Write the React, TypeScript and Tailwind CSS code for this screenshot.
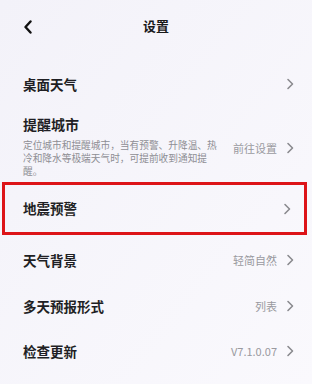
import React from "react";

const Chevron = () => (
  <svg width="8" height="12" viewBox="0 0 8 12" className="shrink-0">
    <path d="M2 1.5 L6.5 6 L2 10.5" fill="none" stroke="#8a8a8f" strokeWidth="1.6" strokeLinecap="round" strokeLinejoin="round" />
  </svg>
);

const Row = ({ title, value, h }: { title: string; value?: string; h: string }) => (
  <div className={`flex items-center justify-between pl-[23px] pr-[18px] ${h}`}>
    <span className="text-[13.5px] font-semibold text-[#1f1f24]">{title}</span>
    <div className="flex items-center gap-[9px]">
      {value && <span className="text-[11px] text-[#9a9aa0]">{value}</span>}
      <Chevron />
    </div>
  </div>
);

export default function App() {
  return (
    <div
      className="w-[312px] h-[384px] overflow-hidden bg-gradient-to-br from-[#f3f2f9] to-[#faf9fd]"
      style={{ fontFamily: '"Noto Sans CJK SC", "Noto Sans", sans-serif' }}
    >
      {/* Header */}
      <div className="relative flex items-center justify-center h-[52px]">
        <svg width="10" height="14" viewBox="0 0 10 14" className="absolute left-[23px] top-[20px]">
          <path d="M7.5 1.5 L2.5 7 L7.5 12.5" fill="none" stroke="#111" strokeWidth="2.4" strokeLinecap="round" strokeLinejoin="round" />
        </svg>
        <span className="text-[13px] font-bold text-[#1a1a1a]">设置</span>
      </div>

      <div className="h-[10px]" />
      <Row title="桌面天气" h="h-[44px]" />

      {/* Reminder city */}
      <div className="flex items-center justify-between pl-[23px] pr-[18px] h-[76px]">
        <div className="flex flex-col mt-[4px]">
          <span className="text-[14px] font-semibold text-[#1f1f24] leading-[20px]">提醒城市</span>
          <span className="text-[9.7px] text-[#8e8e94] leading-[13px] mt-[5px] whitespace-nowrap">
            定位城市和提醒城市，当有预警、升降温、热
            <br />
            冷和降水等极端天气时，可提前收到通知提
            <br />
            醒。
          </span>
        </div>
        <div className="flex items-center gap-[9px] mt-[8px]">
          <span className="text-[11px] text-[#9a9aa0]">前往设置</span>
          <Chevron />
        </div>
      </div>

      {/* Highlighted row */}
      <div className="mx-[2px] w-[305px] border-[3px] border-[#dd1418]">
        <div className="flex items-center justify-between pl-[18px] pr-[13px] h-[47px]">
          <span className="text-[13.5px] font-semibold text-[#1f1f24]">地震预警</span>
          <Chevron />
        </div>
      </div>

      <Row title="天气背景" value="轻简自然" h="h-[50px]" />
      <Row title="多天预报形式" value="列表" h="h-[42px]" />
      <Row title="检查更新" value="V7.1.0.07" h="h-[48px]" />
    </div>
  );
}
